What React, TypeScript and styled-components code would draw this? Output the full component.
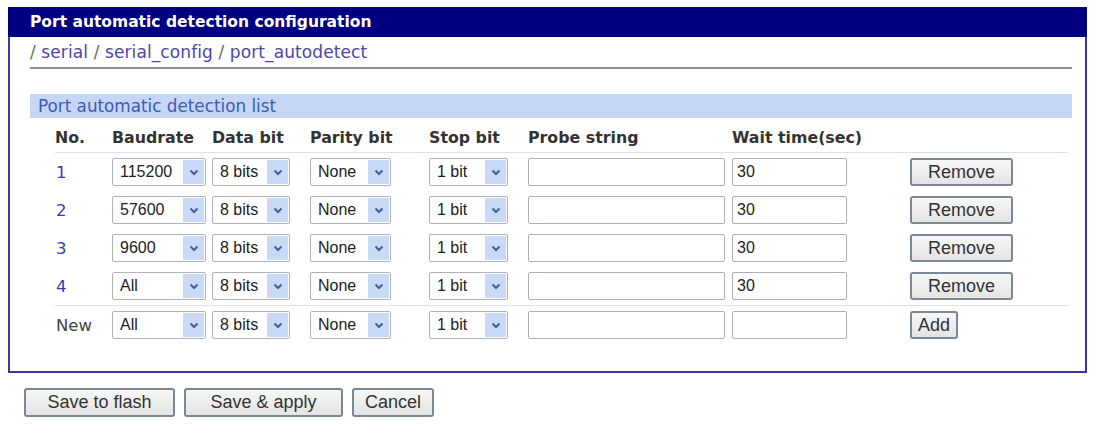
import styled, {createGlobalStyle} from "styled-components";

const GlobalStyle = createGlobalStyle`
  body {
    margin: 0;
    background: #fff;
    font-family: "DejaVu Sans", Verdana, sans-serif;
  }
`

type Entry = { id: string; baud: string; data: string; parity: string; stop: string; probe: string; wait: string };

const entries: Entry[] = [
    {id: '1', baud: '115200', data: '8 bits', parity: 'None', stop: '1 bit', probe: '', wait: '30'},
    {id: '2', baud: '57600', data: '8 bits', parity: 'None', stop: '1 bit', probe: '', wait: '30'},
    {id: '3', baud: '9600', data: '8 bits', parity: 'None', stop: '1 bit', probe: '', wait: '30'},
    {id: '4', baud: 'All', data: '8 bits', parity: 'None', stop: '1 bit', probe: '', wait: '30'},
];

const Chevron = () => (
    <svg width="10" height="7" viewBox="0 0 10 7">
        <path d="M1.5 1.5 L5 5 L8.5 1.5" fill="none" stroke="#3f5f9c" strokeWidth="2"/>
    </svg>
);

const Dropdown = ({value, width}: { value: string; width: number }) => (
    <Select $width={width}>
        <SelectValue>{value}</SelectValue>
        <SelectArrow><Chevron/></SelectArrow>
    </Select>
);

const ControlsRow = ({e, isNew}: { e: Entry; isNew?: boolean }) => (
    <Row $separator={isNew}>
        <IdCell $link={!isNew}>{isNew ? 'New' : e.id}</IdCell>
        <Cell><Dropdown value={e.baud} width={94}/></Cell>
        <Cell><Dropdown value={e.data} width={78}/></Cell>
        <Cell><Dropdown value={e.parity} width={81}/></Cell>
        <Cell><Dropdown value={e.stop} width={79}/></Cell>
        <Cell><TextBox $width={197} value={e.probe} readOnly/></Cell>
        <Cell><TextBox $width={115} value={e.wait} readOnly/></Cell>
        <Cell>{isNew ? <Button $width={48}>Add</Button> : <Button $width={103}>Remove</Button>}</Cell>
    </Row>
);

const App = () => (
    <>
        <GlobalStyle/>
        <Page>
            <Panel>
                <TitleBar>Port automatic detection configuration</TitleBar>
                <Content>
                    <Breadcrumb>
                        <Slash>/</Slash> <Crumb>serial</Crumb> <Slash>/</Slash> <Crumb>serial_config</Crumb>
                        {' '}<Slash>/</Slash> <Crumb>port_autodetect</Crumb>
                    </Breadcrumb>
                    <SectionBand>Port automatic detection list</SectionBand>
                    <Table>
                        <HeaderRow>
                            <Head>No.</Head>
                            <Head>Baudrate</Head>
                            <Head>Data bit</Head>
                            <Head>Parity bit</Head>
                            <Head>Stop bit</Head>
                            <Head>Probe string</Head>
                            <Head>Wait time(sec)</Head>
                            <Head/>
                        </HeaderRow>
                        {entries.map(e => <ControlsRow key={e.id} e={e}/>)}
                        <ControlsRow isNew e={{id: 'new', baud: 'All', data: '8 bits', parity: 'None', stop: '1 bit', probe: '', wait: ''}}/>
                    </Table>
                </Content>
            </Panel>
            <Actions>
                <Button $width={151} $big>Save to flash</Button>
                <Button $width={159} $big>Save &amp; apply</Button>
                <Button $width={82} $big>Cancel</Button>
            </Actions>
        </Page>
    </>
);

const Page = styled.div`
  padding: 7px 0 0 8px;
  width: 1079px;
`

const Panel = styled.section`
  border: 2px solid #3a36a8;
  border-top: none;
  background: #fff;
  padding-bottom: 27px;
`

const TitleBar = styled.div`
  background: #000080;
  color: #fff;
  height: 30px;
  line-height: 30px;
  margin: 0 -2px;
  padding-left: 22px;
  font-weight: bold;
  font-size: 15.5px;
`

const Content = styled.div`
  padding: 0 13px 0 20px;
`

const Breadcrumb = styled.div`
  height: 30px;
  line-height: 30px;
  font-size: 17px;
  letter-spacing: 0.1px;
  border-bottom: 2px solid #8a88a6;
  white-space: nowrap;
`

const Slash = styled.span`
  color: #6c6a4c;
`

const Crumb = styled.span`
  color: #4a48a8;
`

const SectionBand = styled.div`
  margin-top: 25px;
  height: 24px;
  line-height: 24px;
  background: #c6d6f4;
  color: #3c5cb4;
  font-size: 16.8px;
  padding-left: 8px;
`

const Table = styled.div`
  margin: 6px 4px 0 25px;
  display: grid;
  grid-template-columns: 57px 100px 98px 119px 99px 204px 178px 1fr;
`

const HeaderRow = styled.div`
  display: contents;
`

const Head = styled.div`
  height: 28px;
  line-height: 28px;
  font-size: 15.8px;
  font-weight: bold;
  color: #333;
  border-bottom: 1px solid #dde0ee;
  white-space: nowrap;
`

const Row = styled.div<{ $separator?: boolean }>`
  display: contents;

  & > div {
    border-top: ${p => p.$separator ? '1px solid #dde0ee' : 'none'};
  }
`

const Cell = styled.div`
  height: 38px;
  display: flex;
  align-items: center;
`

const IdCell = styled(Cell)<{ $link?: boolean }>`
  padding-left: 1px;
  font-size: 16.5px;
  color: ${p => p.$link ? '#3a3ab4' : '#444'};
`

const Select = styled.div<{ $width: number }>`
  width: ${p => p.$width}px;
  height: 28px;
  box-sizing: border-box;
  border: 1px solid #adb3bd;
  border-radius: 2px;
  display: flex;
  align-items: stretch;
  background: #fff;
  font-family: "Liberation Sans", Arial, sans-serif;
  font-size: 16px;
  color: #222;
`

const SelectValue = styled.span`
  flex: 1;
  padding-left: 7px;
  display: flex;
  align-items: center;
`

const SelectArrow = styled.span`
  width: 21px;
  margin: 1px 1px 1px 0;
  background: #c8daf6;
  display: flex;
  align-items: center;
  justify-content: center;
`

const TextBox = styled.input<{ $width: number }>`
  width: ${p => p.$width}px;
  height: 28px;
  box-sizing: border-box;
  border: 1px solid #aab0b8;
  border-radius: 2px;
  padding: 0 4px;
  font-family: "Liberation Sans", Arial, sans-serif;
  font-size: 16px;
  color: #222;
  outline: none;
`

const Button = styled.button<{ $width: number; $big?: boolean }>`
  width: ${p => p.$width}px;
  height: ${p => p.$big ? 29 : 28}px;
  box-sizing: border-box;
  border: 2px solid #7a8896;
  border-radius: 3px;
  background: linear-gradient(#f7f7f7, #e4e4e4);
  font-family: "Liberation Sans", Arial, sans-serif;
  font-size: 18px;
  color: #333;
  padding: 0;
`

const Actions = styled.div`
  margin: 15px 0 0 16px;
  display: flex;
  gap: 9px;
`

export default App
